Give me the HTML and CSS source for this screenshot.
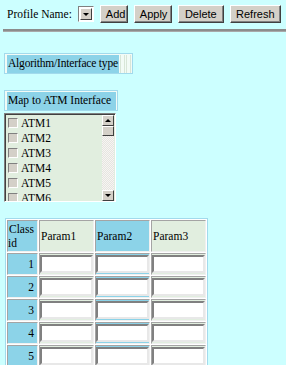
FILE: index.html
```html
<!DOCTYPE html>
<html lang="en">

<head>
    <meta charset="UTF-8">
    <title>Profile</title>
    <link rel="stylesheet" href="styles.css">
</head>

<body>
    <div class="toolbar">
        <span class="toolbar-label">Profile Name:</span>
        <span class="select"><span class="select-btn"><span class="arrow-down"></span></span></span>
        <button class="btn btn-add" type="button">Add</button>
        <button class="btn btn-apply" type="button">Apply</button>
        <button class="btn btn-delete" type="button">Delete</button>
        <button class="btn btn-refresh" type="button">Refresh</button>
    </div>
    <div class="rule"></div>

    <div class="caption-box caption-algo">
        <span class="caption">Algorithm/Interface type</span>
        <span class="caption-empty"></span>
        <span class="caption-empty"></span>
    </div>

    <div class="caption-box caption-map">
        <span class="caption">Map to ATM Interface</span>
    </div>
    <div class="listbox">
        <div class="list-items">
            <div class="list-item"><span class="check"></span>ATM1</div>
            <div class="list-item"><span class="check"></span>ATM2</div>
            <div class="list-item"><span class="check"></span>ATM3</div>
            <div class="list-item"><span class="check"></span>ATM4</div>
            <div class="list-item"><span class="check"></span>ATM5</div>
            <div class="list-item"><span class="check"></span>ATM6</div>
        </div>
        <div class="scrollbar">
            <span class="scroll-btn"><span class="arrow-up"></span></span>
            <span class="scroll-thumb"></span>
            <span class="scroll-track"></span>
            <span class="scroll-btn"><span class="arrow-down"></span></span>
        </div>
    </div>

    <table class="params">
        <tr class="head">
            <th class="col-id">Class id</th>
            <th class="col-green">Param1</th>
            <th class="col-blue">Param2</th>
            <th class="col-green">Param3</th>
        </tr>
        <tr>
            <td class="col-id num">1</td>
            <td class="col-green"><input type="text"></td>
            <td class="col-blue"><input type="text"></td>
            <td class="col-green"><input type="text"></td>
        </tr>
        <tr>
            <td class="col-id num">2</td>
            <td class="col-green"><input type="text"></td>
            <td class="col-blue"><input type="text"></td>
            <td class="col-green"><input type="text"></td>
        </tr>
        <tr>
            <td class="col-id num">3</td>
            <td class="col-green"><input type="text"></td>
            <td class="col-blue"><input type="text"></td>
            <td class="col-green"><input type="text"></td>
        </tr>
        <tr>
            <td class="col-id num">4</td>
            <td class="col-green"><input type="text"></td>
            <td class="col-blue"><input type="text"></td>
            <td class="col-green"><input type="text"></td>
        </tr>
        <tr>
            <td class="col-id num">5</td>
            <td class="col-green"><input type="text"></td>
            <td class="col-blue"><input type="text"></td>
            <td class="col-green"><input type="text"></td>
        </tr>
    </table>
</body>

</html>
```

FILE: styles.css
```css
body {
    font-family: "Liberation Serif", serif;
    font-size: 11.5px;
    background-color: #ccffff;
    color: #000;
    margin: 0;
    padding: 5px 0 0 4px;
}

.toolbar {
    display: flex;
    align-items: center;
    height: 18px;
    padding-left: 3px;
}

.toolbar-label {
    margin-right: 6px;
}

.select {
    display: flex;
    justify-content: flex-end;
    width: 16px;
    height: 16px;
    box-sizing: border-box;
    background: #fff;
    border: 1px solid;
    border-color: #808080 #fff #fff #808080;
    padding: 1px;
}

.select-btn {
    display: flex;
    align-items: center;
    justify-content: center;
    width: 10px;
    background: #d4d0c8;
    border: 1px solid;
    border-color: #fff #404040 #404040 #fff;
}

.arrow-down,
.arrow-up {
    width: 0;
    height: 0;
    border-left: 3px solid transparent;
    border-right: 3px solid transparent;
}

.arrow-down {
    border-top: 3px solid #000;
}

.arrow-up {
    border-bottom: 3px solid #000;
}

.btn {
    font-family: "Liberation Sans", Arial, sans-serif;
    font-size: 11px;
    height: 18px;
    padding: 0 5px;
    margin-left: 6px;
    background: #d4d0c8;
    color: #000;
    border: 1px solid;
    border-color: #fff #404040 #404040 #fff;
    box-shadow: inset -1px -1px 0 #808080;
}

.btn-add { width: 28px; }
.btn-apply { width: 38px; }
.btn-delete { width: 46px; }
.btn-refresh { width: 51px; }

.rule {
    margin: 6px 0 0 -1px;
    height: 3px;
    background: #8c8c8c;
    border-bottom: 1px solid #a8a8a8;
    box-sizing: border-box;
}

.caption-box {
    display: inline-flex;
    border: 1px solid #a2daec;
    background: #f2fbf6;
    padding: 1px 1px 0 2px;
    height: 21px;
    box-sizing: border-box;
}

.caption-algo {
    margin-top: 21px;
}

.caption-algo .caption {
    letter-spacing: -0.2px;
}

.caption-map {
    margin-top: 16px;
    display: flex;
    width: 114px;
}

.caption {
    background: #8cd3e8;
    padding: 0 1px;
    line-height: 17px;
    white-space: nowrap;
    flex: 1;
}

.caption-empty {
    width: 3px;
    margin-left: 1px;
    border-left: 1px solid #d8e6d8;
    border-right: 1px solid #d8e6d8;
}

.listbox {
    display: flex;
    width: 112px;
    height: 89px;
    box-sizing: border-box;
    margin-top: 2px;
    border: 1px solid;
    border-color: #808080 #fff #fff #808080;
    box-shadow: inset 1px 1px 0 #404040;
    background: #e1eedf;
    padding: 1px 1px 0 1px;
}

.list-items {
    flex: 1;
    overflow: hidden;
}

.list-item {
    display: flex;
    align-items: center;
    height: 15px;
    padding-left: 2px;
}

.check {
    width: 10px;
    height: 10px;
    box-sizing: border-box;
    margin-right: 3px;
    background: #d4d0c8;
    border: 1px solid;
    border-color: #808080 #fff #fff #808080;
}

.scrollbar {
    display: flex;
    flex-direction: column;
    width: 12px;
}

.scroll-btn,
.scroll-thumb {
    display: flex;
    align-items: center;
    justify-content: center;
    height: 11px;
    background: #d4d0c8;
    border: 1px solid;
    border-color: #fff #404040 #404040 #fff;
    box-sizing: border-box;
}

.scroll-thumb {
    height: 10px;
}

.scroll-track {
    flex: 1;
    background: repeating-conic-gradient(#e6e4e0 0 25%, #f6f5f2 0 50%) 0 0 / 2px 2px;
}

.params {
    margin-top: 16px;
    margin-left: 1px;
    border: 1px solid #a2daec;
    border-spacing: 1px;
    background: #fff;
}

.params th,
.params td {
    padding: 0;
    border: 1px solid;
    border-color: #a4a4a4 #f0f0f0 #f0f0f0 #a4a4a4;
    font-weight: normal;
    text-align: left;
}

.params .head th {
    height: 30px;
    text-indent: 1px;
}

.params td {
    height: 20px;
}

.col-id {
    width: 29px;
    background: #8cd3e8;
}

.params th.col-id {
    vertical-align: top;
    line-height: 14px;
    padding-top: 1px;
    height: 29px;
}

.col-green {
    width: 53px;
    background: #e1eedf;
}

.col-blue {
    width: 53px;
    background: #8cd3e8;
}

.params td.num {
    text-align: right;
    padding-right: 3px;
    width: 26px;
}

.params input {
    display: block;
    width: 53px;
    height: 18px;
    margin: 0;
    box-sizing: border-box;
    border: 2px solid;
    border-color: #808080 #e8e8e8 #e8e8e8 #808080;
    background: #fff;
    padding: 0;
}
```
